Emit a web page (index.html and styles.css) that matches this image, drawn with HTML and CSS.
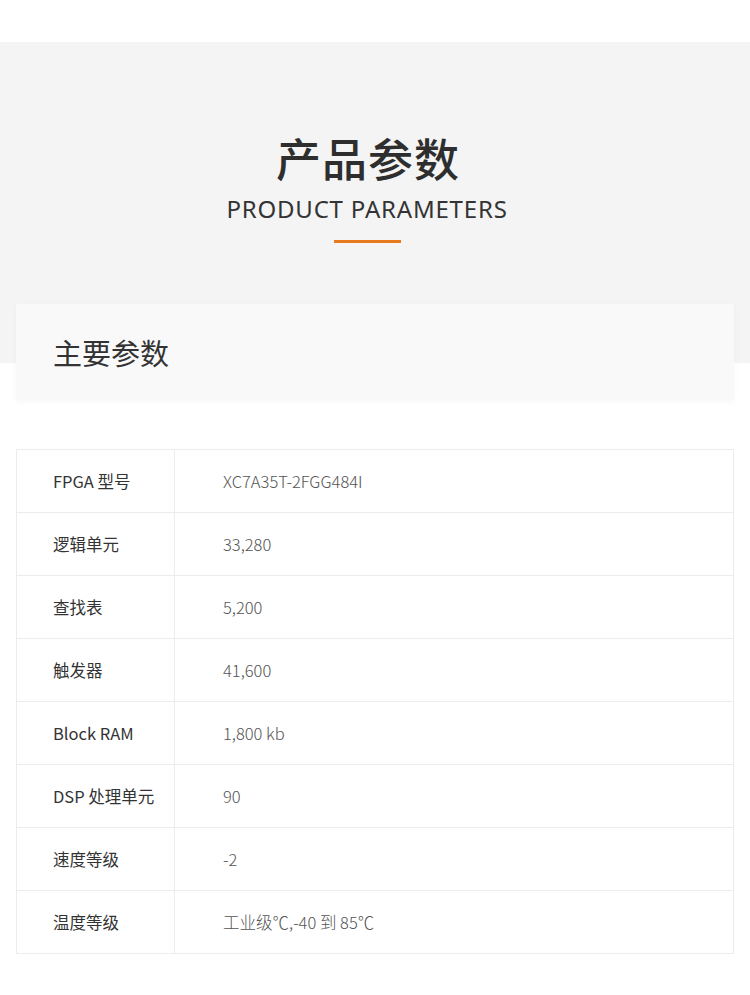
FILE: index.html
```html
<!DOCTYPE html>
<html lang="zh">
<head>
<meta charset="utf-8">
<link rel="stylesheet" href="styles.css">
</head>
<body>
<div class="top-space"></div>
<header class="hero">
  <h1 class="hero-title">产品参数</h1>
  <p class="hero-sub">PRODUCT PARAMETERS</p>
  <div class="hero-line"></div>
</header>
<div class="card-wrap">
  <div class="card">主要参数</div>
</div>
<table class="spec">
  <tr><td class="k">FPGA 型号</td><td class="v">XC7A35T-2FGG484I</td></tr>
  <tr><td class="k">逻辑单元</td><td class="v">33,280</td></tr>
  <tr><td class="k">查找表</td><td class="v">5,200</td></tr>
  <tr><td class="k">触发器</td><td class="v">41,600</td></tr>
  <tr><td class="k">Block RAM</td><td class="v">1,800 kb</td></tr>
  <tr><td class="k">DSP 处理单元</td><td class="v">90</td></tr>
  <tr><td class="k">速度等级</td><td class="v">-2</td></tr>
  <tr><td class="k">温度等级</td><td class="v">工业级℃,-40 到 85℃</td></tr>
</table>
</body>
</html>
```
FILE: styles.css
```css
html, body {
  margin: 0;
  padding: 0;
  background: #fff;
  font-family: "Noto Sans", "Noto Sans CJK SC", sans-serif;
  color: #333;
}
.top-space {
  height: 42px;
}
.hero {
  background: #f4f4f4;
  padding: 89px 16px 61px 0;
  display: flex;
  flex-direction: column;
  align-items: center;
}
.hero-title {
  margin: 0;
  font-family: "Noto Sans CJK SC", sans-serif;
  font-size: 45px;
  font-weight: 500;
  line-height: 54px;
  color: #2e2e2e;
  letter-spacing: 1px;
  padding-left: 2px;
}
.hero-sub {
  margin: 9px 0 0;
  font-family: "Noto Sans", sans-serif;
  font-size: 24px;
  font-weight: 400;
  line-height: 30px;
  color: #333;
  letter-spacing: 0.8px;
}
.hero-line {
  width: 67px;
  height: 3px;
  background: #e8791d;
  margin-top: 16px;
}
.card-wrap {
  background: linear-gradient(#f4f4f4 59px, #fff 59px);
  padding: 0 16px;
}
.card {
  height: 96px;
  background: #f9f9f9;
  box-shadow: 0 2px 6px rgba(0,0,0,0.035);
  display: flex;
  align-items: center;
  padding-left: 37px;
  font-family: "Noto Sans CJK SC", sans-serif;
  font-size: 29px;
  color: #333;
}
.spec {
  margin: 49px 16px 0;
  width: 718px;
  border-collapse: collapse;
}
.spec td {
  border: 1px solid #ececec;
  height: 62px;
  padding: 0;
  font-family: "Noto Sans CJK SC", sans-serif;
  font-size: 16.5px;
  vertical-align: middle;
}
.spec .k {
  width: 121px;
  padding-left: 36px;
  color: #333;
}
.spec .v {
  padding-left: 48px;
  color: #555;
  font-weight: 300;
}
```
